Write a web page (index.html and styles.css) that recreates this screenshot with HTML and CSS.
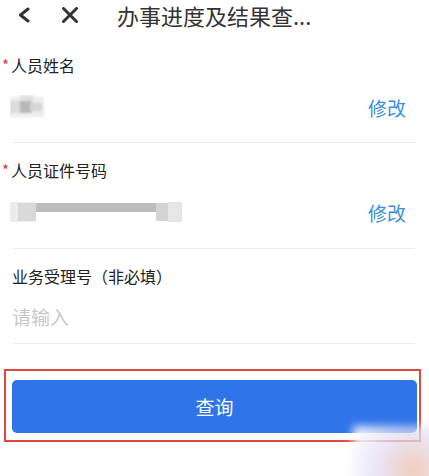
FILE: index.html
```html
<!DOCTYPE html>
<html lang="zh-CN">
<head>
<meta charset="utf-8">
<title>办事进度及结果查询</title>
<link rel="stylesheet" href="styles.css">
</head>
<body>
<div class="page">
  <header class="header">
    <svg class="icon-back" width="14" height="16" viewBox="0 0 14 16"><path d="M11 2 L3.5 8 L11 14" fill="none" stroke="#333" stroke-width="3" stroke-linecap="round" stroke-linejoin="round"/></svg>
    <svg class="icon-close" width="18" height="16" viewBox="0 0 18 16"><path d="M2.5 1.5 L15.5 14.5 M15.5 1.5 L2.5 14.5" fill="none" stroke="#333" stroke-width="3" stroke-linecap="round"/></svg>
    <div class="title">办事进度及结果查...</div>
  </header>

  <section class="form">
    <div class="field">
      <div class="label"><span class="star">*</span>人员姓名</div>
      <div class="row">
        <svg class="mask" width="36" height="24" viewBox="0 0 36 24">
          <defs><filter id="b1"><feGaussianBlur stdDeviation="0.8"/></filter></defs>
          <g filter="url(#b1)">
            <rect x="0" y="2" width="34" height="20" fill="#ececec"/>
            <rect x="10" y="0" width="14" height="6" fill="#e2e2e2"/>
            <rect x="0" y="6" width="12" height="12" fill="#dcdcdc"/>
            <rect x="10" y="6" width="12" height="12" fill="#b8b8b8"/>
            <rect x="20" y="8" width="12" height="8" fill="#d6d6d6"/>
            <rect x="2" y="18" width="20" height="5" fill="#f1f1f1"/>
          </g>
        </svg>
        <span class="edit">修改</span>
      </div>
    </div>

    <div class="field">
      <div class="label"><span class="star">*</span>人员证件号码</div>
      <div class="row">
        <svg class="mask" width="174" height="24" viewBox="0 0 174 24">
          <defs><filter id="b2"><feGaussianBlur stdDeviation="0.7"/></filter></defs>
          <g filter="url(#b2)">
            <rect x="0" y="2" width="26" height="20" fill="#ececec"/>
            <rect x="8" y="3" width="18" height="18" fill="#d9d9d9"/>
            <rect x="26" y="3" width="130" height="9" fill="#bdbdbd"/>
            <rect x="146" y="3" width="18" height="18" fill="#d4d4d4"/>
            <rect x="158" y="2" width="14" height="20" fill="#e6e6e6"/>
          </g>
        </svg>
        <span class="edit">修改</span>
      </div>
    </div>

    <div class="field last">
      <div class="label">业务受理号（非必填）</div>
      <div class="row input-row">
        <span class="placeholder">请输入</span>
      </div>
    </div>
  </section>

  <div class="highlight">
    <button class="btn">查询</button>
  </div>

  <div class="watermark"></div>
</div>
</body>
</html>
```

FILE: styles.css
```css
html, body {
  margin: 0;
  padding: 0;
  background: #ffffff;
}
body {
  font-family: "Noto Sans CJK SC", "Noto Sans", sans-serif;
  color: #222;
}
.page {
  position: relative;
  width: 429px;
  height: 476px;
  overflow: hidden;
}
.header {
  height: 30px;
  display: flex;
  align-items: center;
  padding-left: 17px;
}
.icon-back {
  flex: none;
}
.icon-close {
  flex: none;
  margin-left: 30px;
}
.title {
  margin-left: 38px;
  font-size: 22px;
  line-height: 30px;
  color: #333;
}
.form {
  margin-top: 8px;
  padding-left: 12px;
  padding-right: 14px;
}
.field {
  padding-top: 15px;
  padding-bottom: 15px;
  border-bottom: 1px solid #ececec;
  margin-left: 1px;
}
.field + .field {
  padding-bottom: 16px;
}
.field.last {
  padding-bottom: 7px;
}
.label {
  font-size: 16px;
  line-height: 24px;
  color: #222;
  margin-left: -1px;
}
.star {
  color: #d23a4a;
  font-size: 15px;
  margin-left: -10px;
  display: inline-block;
  width: 9px;
  vertical-align: 1px;
}
.row {
  margin-top: 10px;
  height: 40px;
  display: flex;
  align-items: center;
  justify-content: space-between;
}
.input-row {
  margin-top: 8px;
}
.mask {
  display: block;
  margin-left: -3px;
}
.edit {
  font-size: 19px;
  color: #3b8fdc;
  margin-right: 9px;
}
.placeholder {
  font-size: 19px;
  color: #c8c8c8;
  margin-left: -1px;
}
.highlight {
  margin: 25px 8px 0 4px;
  border: 2px solid #e0483c;
  padding: 9px 2px 7px 6px;
}
.btn {
  display: block;
  width: 100%;
  height: 53px;
  border: none;
  border-radius: 5px;
  background: #2f74e9;
  color: #ffffff;
  font-family: "Noto Sans CJK SC", "Noto Sans", sans-serif;
  font-size: 19px;
  padding: 0;
}
.watermark {
  position: absolute;
  right: -8px;
  top: 426px;
  width: 84px;
  height: 62px;
  background: radial-gradient(circle at 72% 72%, rgba(240, 196, 175, 0.85), rgba(226, 222, 246, 0.75) 50%, rgba(250, 250, 255, 0.9) 90%);
  filter: blur(4px);
}
```
